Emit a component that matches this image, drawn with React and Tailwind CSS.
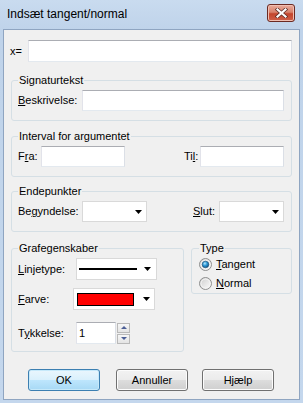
import React from 'react';

const Arrow = () => (
  <svg width="7" height="4" viewBox="0 0 7 4" className="block">
    <polygon points="0,0 7,0 3.5,4" fill="#000" />
  </svg>
);

const TextBox = ({ className = '', children }) => (
  <div
    className={`h-[21px] bg-white border border-[#dbdfe6] border-t-[#abadb3] border-l-[#e2e3ea] border-b-[#e3e9ef] flex items-center px-[2px] ${className}`}
  >
    {children}
  </div>
);

const Combo = ({ className = '', children }) => (
  <div className={`h-[21px] bg-white border border-[#d9d9d9] flex items-center pr-[4px] ${className}`}>
    <div className="flex-1 flex items-center">{children}</div>
    <Arrow />
  </div>
);

const Group = ({ title, className = '', children }) => (
  <fieldset className={`border border-[#d5dfe5] rounded-[3px] pl-[6px] pr-[7px] ${className}`}>
    <legend className="px-[1px] leading-[14px]">{title}</legend>
    {children}
  </fieldset>
);

const Radio = ({ checked, label, hot }) => (
  <div className="flex items-center h-[16px] gap-[4px]">
    <svg width="13" height="13" viewBox="0 0 13 13">
      <defs>
        <linearGradient id={`rb-${label}`} x1="0" y1="0" x2="1" y2="1">
          <stop offset="0" stopColor="#cbcbcb" />
          <stop offset="1" stopColor="#ffffff" />
        </linearGradient>
        <radialGradient id="dot" cx="0.4" cy="0.35" r="0.7">
          <stop offset="0" stopColor="#b9e8fd" />
          <stop offset="0.45" stopColor="#2d9ad8" />
          <stop offset="1" stopColor="#0d4a7a" />
        </radialGradient>
      </defs>
      <circle cx="6.5" cy="6.5" r="6" fill={`url(#rb-${label})`} stroke="#8e8f8f" strokeWidth="1" />
      <circle cx="6.5" cy="6.5" r="4.5" fill="none" stroke="#f4f4f4" strokeWidth="1" />
      {checked && <circle cx="6.5" cy="6.5" r="3.3" fill="url(#dot)" stroke="#1b4f76" strokeWidth="0.6" />}
    </svg>
    <span>
      <u>{hot}</u>
      {label.slice(1)}
    </span>
  </div>
);

const Button = ({ children, primary, className = '' }) => (
  <button
    className={`w-[72px] h-[22px] rounded-[3px] border flex items-center justify-center ${
      primary
        ? 'border-[#3c7fb1] bg-[linear-gradient(#eaf6fd,#d9f0fc_50%,#bee6fd_50%,#a7d9f5)] shadow-[inset_0_0_0_1px_#c6e9fa]'
        : 'border-[#707070] bg-[linear-gradient(#f2f2f2,#ebebeb_50%,#dddddd_50%,#cfcfcf)] shadow-[inset_0_0_0_1px_#fcfcfc]'
    } ${className}`}
  >
    {children}
  </button>
);

export default function App() {
  return (
    <div className="w-[303px] h-[403px] bg-[linear-gradient(#c9dbef,#bfd3ea_30px,#c4d7ed)] px-[3px] pb-[3px] flex flex-col font-['Liberation_Sans',Arial,sans-serif] text-[11px] text-black">
      {/* title bar */}
      <div className="h-[29px] flex items-start shrink-0">
        <span className="ml-[4px] mt-[6px] text-[12px] leading-[16px]">Indsæt tangent/normal</span>
        <div className="ml-auto mr-[5px] mt-[4px] w-[28px] h-[18px] rounded-[3px] border border-[#6b2a22] bg-[linear-gradient(#e9ab9c,#d8826c_45%,#c3452c_55%,#d0614a)] shadow-[inset_0_0_0_1px_#f0bfb2] flex items-center justify-center">
          <svg width="13" height="10" viewBox="0 0 13 10">
            <path d="M2.5 1.5 L10.5 8.5 M10.5 1.5 L2.5 8.5" stroke="#5a2b25" strokeWidth="3.6" strokeLinecap="square" />
            <path d="M2.5 1.5 L10.5 8.5 M10.5 1.5 L2.5 8.5" stroke="#ffffff" strokeWidth="2.2" strokeLinecap="square" />
          </svg>
        </div>
      </div>

      {/* client area */}
      <div className="flex-1 border border-[#8fa5c1] bg-[#f0f0f0] px-[7px] pt-[10px] flex flex-col">
        <div className="flex items-center -ml-[1px]">
          <span className="w-[18px]">x=</span>
          <TextBox className="w-[265px] h-[22px]" />
        </div>

        <Group title="Signaturtekst" className="mt-[11px] pt-[3px] pb-[9px]">
          <div className="flex items-center">
            <span className="w-[64px]">
              <u>B</u>eskrivelse:
            </span>
            <TextBox className="flex-1" />
          </div>
        </Group>

        <Group title="Interval for argumentet" className="mt-[8px] pt-[3px] pb-[9px]">
          <div className="flex items-center justify-between">
            <div className="flex items-center">
              <span className="w-[23px]">
                F<u>r</u>a:
              </span>
              <TextBox className="w-[84px]" />
            </div>
            <div className="flex items-center">
              <span className="w-[16px]">
                Ti<u>l</u>:
              </span>
              <TextBox className="w-[84px]" />
            </div>
          </div>
        </Group>

        <Group title="Endepunkter" className="mt-[7px] pt-[3px] pb-[9px]">
          <div className="flex items-center justify-between">
            <div className="flex items-center">
              <span className="w-[64px]">
                Be<u>g</u>yndelse:
              </span>
              <Combo className="w-[65px]" />
            </div>
            <div className="flex items-center">
              <span className="w-[26px]">
                <u>S</u>lut:
              </span>
              <Combo className="w-[65px]" />
            </div>
          </div>
        </Group>

        <div className="flex items-start gap-[7px] mt-[9px]">
          <Group title="Grafegenskaber" className="w-[173px] pt-[3px] pb-[7px]">
            <div className="flex items-center">
              <span className="w-[58px]">
                <u>L</u>injetype:
              </span>
              <Combo className="w-[81px] h-[22px] pr-[5px]">
                <div className="ml-[2px] w-[58px] h-[2px] bg-black" />
              </Combo>
            </div>
            <div className="flex items-center mt-[8px]">
              <span className="w-[55px]">
                <u>F</u>arve:
              </span>
              <Combo className="w-[82px] h-[22px] pr-[4px]">
                <div className="ml-[3px] w-[57px] h-[13px] bg-[#ff0000] border border-black" />
              </Combo>
            </div>
            <div className="flex items-center mt-[12px]">
              <span className="w-[58px]">
                T<u>y</u>kkelse:
              </span>
              <TextBox className="w-[40px] h-[22px]">1</TextBox>
              <div className="ml-[1px] flex flex-col gap-[1px]">
                <div className="w-[13px] h-[10px] border border-[#b9b9b9] bg-[linear-gradient(#f6f6f6,#e4e4e4)] flex items-center justify-center">
                  <svg width="6" height="3" viewBox="0 0 6 3">
                    <polygon points="0,3 6,3 3,0" fill="#4c5f96" />
                  </svg>
                </div>
                <div className="w-[13px] h-[10px] border border-[#b9b9b9] bg-[linear-gradient(#f6f6f6,#e4e4e4)] flex items-center justify-center">
                  <svg width="6" height="3" viewBox="0 0 6 3">
                    <polygon points="0,0 6,0 3,3" fill="#4c5f96" />
                  </svg>
                </div>
              </div>
            </div>
          </Group>

          <Group title="Type" className="w-[101px] pl-[7px] pt-[1px] pb-[2px]">
            <div className="flex flex-col gap-[3px]">
              <Radio checked label="Tangent" hot="T" />
              <Radio label="Normal" hot="N" />
            </div>
          </Group>
        </div>

        <div className="flex items-center mt-[17px] ml-[17px]">
          <Button primary>OK</Button>
          <Button className="ml-[16px]">Annuller</Button>
          <Button className="ml-[14px]">Hjælp</Button>
        </div>
      </div>
    </div>
  );
}
